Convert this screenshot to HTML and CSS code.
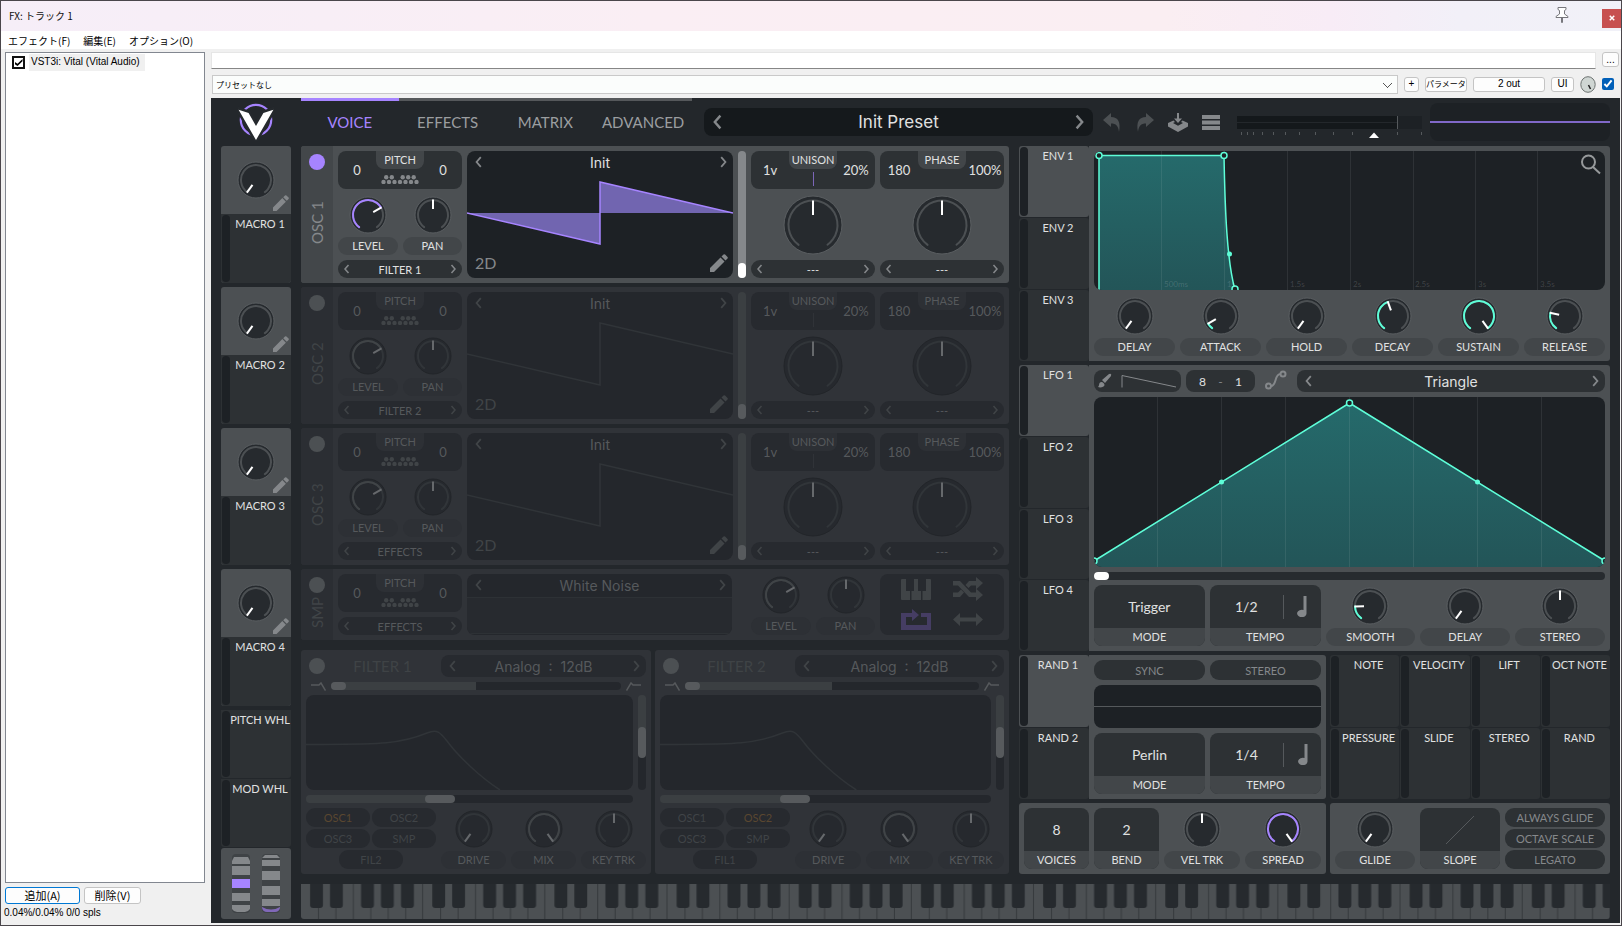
FILE: index.html
```html
<!DOCTYPE html>
<html lang="ja">
<head>
<meta charset="utf-8">
<title>FX: トラック 1</title>
<link rel="stylesheet" href="styles.css">
</head>
<body>
<svg class="defs" aria-hidden="true">
  <defs>
    <linearGradient id="teal" x1="0" y1="0" x2="0" y2="1"><stop offset="0" stop-color="#256a6b"/><stop offset="1" stop-color="#235558"/></linearGradient>
    <pattern id="octave" width="700" height="35" patternUnits="userSpaceOnUse">
      <rect width="700" height="35" fill="#4c5053"/>
      <path d="M97 0h6v35h-6zM197 0h6v35h-6zM297 0h6v35h-6zM397 0h6v35h-6zM497 0h6v35h-6zM597 0h6v35h-6zM694 0h6v35h-6z" fill="#363a3d"/>
      <g fill="#262a2e"><rect x="52" y="-6" width="74" height="30" rx="17" ry="3"/><rect x="166" y="-6" width="74" height="30" rx="17" ry="3"/><rect x="344" y="-6" width="74" height="30" rx="17" ry="3"/><rect x="458" y="-6" width="74" height="30" rx="17" ry="3"/><rect x="573" y="-6" width="74" height="30" rx="17" ry="3"/></g>
    </pattern>
  </defs>
  <symbol id="knob" viewBox="-19 -19 38 38">
    <circle r="18" class="k-face"/>
    <circle r="15" class="k-arc k-track" pathLength="360"/>
    <circle r="15" class="k-arc k-value" pathLength="360"/>
    <path d="M0-15.500V-6" class="k-hand"/>
  </symbol>
  <symbol id="knob-big" viewBox="-30 -30 60 60">
    <circle r="29" class="k-face"/>
    <circle r="24.500" class="k-arc k-track" pathLength="360"/>
    <path d="M0-24.500V-10" class="k-hand"/>
  </symbol>
  <symbol id="prev" viewBox="0 0 10 10"><path d="M6.500 1 3 5l3.500 4" class="line"/></symbol>
  <symbol id="next" viewBox="0 0 10 10"><path d="M3.500 1 7 5 3.500 9" class="line"/></symbol>
  <symbol id="pencil" viewBox="0 0 18 18"><path d="M0 18v-4L10.500 3.500l4 4L4 18zM11.500 2.500 13.500.5q.8-.7 1.600 0l2.400 2.400q.7.800 0 1.600l-2 2z"/></symbol>
  <symbol id="dots" viewBox="0 0 38 9"><g><circle cx="2.500" cy="7" r="2.200"/><circle cx="8" cy="7" r="2.200"/><circle cx="13.500" cy="7" r="2.200"/><circle cx="19" cy="7" r="2.200"/><circle cx="24.500" cy="7" r="2.200"/><circle cx="30" cy="7" r="2.200"/><circle cx="35.500" cy="7" r="2.200"/><circle cx="5.200" cy="2.300" r="2.200"/><circle cx="10.800" cy="2.300" r="2.200"/><circle cx="21.700" cy="2.300" r="2.200"/><circle cx="27.200" cy="2.300" r="2.200"/><circle cx="32.700" cy="2.300" r="2.200"/></g></symbol>
  <symbol id="note" viewBox="0 0 10 21"><path d="M6.500 0H9.500V17.300A4.700 3.700 0 1 1 6.500 14z"/></symbol>
  <symbol id="lowpass" viewBox="0 0 15 9"><path d="M0 3H8L10 1 14.500 8.500" class="line"/></symbol>
  <symbol id="highpass" viewBox="0 0 15 9"><path d="M15 3H7L5 1 .5 8.500" class="line"/></symbol>
</svg>

<header class="titlebar">
  <h1>FX: トラック 1</h1>
  <button class="pin" aria-label="Pin"><svg width="14" height="16" viewBox="0 0 14 16"><path d="M3 .5H11V2.500L9.500 3.500V7L13 9.500V10.500H1V9.500L4.500 7V3.500L3 2.500zM6.500 10.500h1V15.500h-1z" fill="#fff" stroke="#77777c"/></svg></button>
  <button class="close" aria-label="Close"><svg width="6" height="6" viewBox="0 0 8 8"><path d="M1 1 7 7M7 1 1 7" stroke="#fff" stroke-width="2"/></svg></button>
</header>
<nav class="menu"><button>エフェクト(F)</button><button>編集(E)</button><button>オプション(O)</button></nav>

<div class="client">
  <aside class="chain">
    <ul class="fx-list"><li><label><input type="checkbox" checked><span>VST3i: Vital (Vital Audio)</span></label></li></ul>
    <div class="chain-buttons"><button class="win-btn primary">追加(A)</button><button class="win-btn">削除(V)</button></div>
    <p class="cpu">0.04%/0.04% 0/0 spls</p>
  </aside>

  <main class="host">
    <div class="host-row"><input class="comment" type="text" aria-label="Comment"><button class="win-btn more">...</button></div>
    <div class="host-row second">
      <select class="preset-select" aria-label="Preset"><option>プリセットなし</option></select>
      <button class="win-btn plus">+</button>
      <button class="win-btn param">パラメータ</button>
      <button class="win-btn out">2 out</button>
      <button class="win-btn ui">UI</button>
      <svg class="wet" viewBox="0 0 16 17"><ellipse cx="8" cy="8.500" rx="7.200" ry="7.800" fill="#cfd6d3" stroke="#6d7371"/><path d="M8.500 9 10.500 13" stroke="#222" stroke-width="1.500"/></svg>
      <input class="bypass" type="checkbox" checked aria-label="Enable">
    </div>

    <section class="vital">
      <header class="v-head">
        <svg class="logo" viewBox="0 0 36 38"><circle cx="18" cy="17" r="15.200" fill="none" stroke="#a684ff" stroke-width="2.200"/><path d="M.6 6.700 10.600 10 18 23 25.400 10 35.400 6.700 18 37z" fill="#fff" stroke="#25292d" stroke-width="5" paint-order="stroke"/></svg>
        <nav class="tabs"><button class="tab active">VOICE</button><button class="tab">EFFECTS</button><button class="tab">MATRIX</button><button class="tab">ADVANCED</button></nav>
        <div class="preset"><button aria-label="Previous preset"><svg><use href="#prev"/></svg></button><span>Init Preset</span><button aria-label="Next preset"><svg><use href="#next"/></svg></button></div>
        <div class="tools">
          <button class="dimmed" aria-label="Undo"><svg width="18" height="19" viewBox="0 0 18 19"><path d="M0 7 8 0V4C15 4 18 9 16 19 15.500 13 13 10.500 8 10.500V14z"/></svg></button>
          <button class="dimmed" aria-label="Redo"><svg width="18" height="19" viewBox="0 0 18 19"><path d="M18 7 10 0V4C3 4 0 9 2 19 2.500 13 5 10.500 10 10.500V14z"/></svg></button>
          <button aria-label="Save"><svg width="20" height="19" viewBox="0 0 20 19"><path d="M9 0h2v5.500h3L10 10 6 5.500h3zM0 10 5.500 7.500 7 9 5 10l5 2.700L15 10l-2-1 1.500-1.500L20 10v3.500L10 19 0 13.500z"/></svg></button>
          <button aria-label="Menu"><svg width="18" height="15" viewBox="0 0 18 15"><path d="M0 0h18v4H0zM0 5.500h18v4H0zM0 11h18v4H0z"/></svg></button>
        </div>
        <svg class="meter" viewBox="0 0 185 24" preserveAspectRatio="none"><path d="M0 0H185V6H0zM0 7H185V13H0z" fill="#14181b"/><path d="M161 0h24v13h-24z" fill="#1d2125"/><path d="M160 0h1v13h-1z" fill="#55595c"/><path d="M4.500 16v3M10.500 16v3M16.500 16v3M25.500 16v3M36.500 16v3M48.500 16v3M62.500 16v3M78.500 16v3M96.500 16v3M115.500 16v3M160.500 16v3M184.500 16v3" stroke="#55595c"/><path d="M137 16.500 142 22H132z" fill="#fff"/></svg>
        <div class="scope"></div>
      </header>

      <div class="v-body">
        <div class="sources">
          <section class="macro"><label class="dial" style="--v:0"><svg class="knob"><use href="#knob"/></svg><input type="range" value="0" aria-label="Macro 1"></label><svg class="edit"><use href="#pencil"/></svg><div class="mod"><span>MACRO 1</span></div></section>
          <section class="macro"><label class="dial" style="--v:0"><svg class="knob"><use href="#knob"/></svg><input type="range" value="0" aria-label="Macro 2"></label><svg class="edit"><use href="#pencil"/></svg><div class="mod"><span>MACRO 2</span></div></section>
          <section class="macro"><label class="dial" style="--v:0"><svg class="knob"><use href="#knob"/></svg><input type="range" value="0" aria-label="Macro 3"></label><svg class="edit"><use href="#pencil"/></svg><div class="mod"><span>MACRO 3</span></div></section>
          <section class="macro"><label class="dial" style="--v:0"><svg class="knob"><use href="#knob"/></svg><input type="range" value="0" aria-label="Macro 4"></label><svg class="edit"><use href="#pencil"/></svg><div class="mod"><span>MACRO 4</span></div></section>
          <div class="wheel-mods"><div class="mod"><span>PITCH WHL</span></div><div class="mod"><span>MOD WHL</span></div>
          <div class="wheels">
            <svg viewBox="0 0 18 59"><rect width="18" height="59" rx="4" fill="#3f4346"/><path d="M2 3h14l2 4H0zM0 12h18v9H0zM0 39h18v8H0zM0 51h18v4q-2 3-5 3H5q-3 0-5-3z" fill="#85888b"/><path d="M0 7h18v3H0z" fill="#85888b"/><path d="M0 25h18v9H0z" fill="#a684ff"/></svg>
            <svg viewBox="0 0 18 59"><rect width="18" height="59" rx="4" fill="#3f4346"/><path d="M3 1h12l3 3H0zM0 6h18v6H0zM0 17h18v9H0zM0 32h18v9H0zM0 45h18v7H0z" fill="#85888b"/><path d="M0 53q9 5 18 0v1q-1 4-5 4H5q-4 0-5-4z" fill="#8068b8"/></svg>
          </div></div>
        </div>

        <div class="voice">
          <section class="osc">
            <div class="strip"><button class="power" aria-label="OSC 1 on"></button><h2>OSC 1</h2></div>
            <div class="osc-col">
              <div class="duo"><span>0</span><b>PITCH</b><span>0</span><svg class="dots"><use href="#dots"/></svg></div>
              <div class="dials"><label class="dial" style="--v:.71"><svg class="knob"><use href="#knob"/></svg><input type="range" value="71"><span>LEVEL</span></label><label class="dial bipolar" style="--v:.5"><svg class="knob"><use href="#knob"/></svg><input type="range"><span>PAN</span></label></div>
              <div class="picker"><button aria-label="Previous"><svg><use href="#prev"/></svg></button><span>FILTER 1</span><button aria-label="Next"><svg><use href="#next"/></svg></button></div>
            </div>
            <div class="wave"><div class="picker name"><button aria-label="Previous"><svg><use href="#prev"/></svg></button><span>Init</span><button aria-label="Next"><svg><use href="#next"/></svg></button></div><svg class="saw" viewBox="0 0 266 64" preserveAspectRatio="none"><path d="M0 32H133V63zM133 32V1L266 32z" class="saw-fill"/><path d="M0 32 133 63V1L266 32" class="saw-line"/></svg><div class="wave-foot"><button>2D</button><button aria-label="Edit"><svg><use href="#pencil"/></svg></button></div></div>
            <input class="v-slider" type="range" value="0" aria-label="Frame">
            <div class="osc-col">
              <div class="duo"><span>1v</span><b>UNISON</b><span>20%</span><i class="voice-mark"></i></div>
              <label class="dial big bipolar" style="--v:.5"><svg class="knob"><use href="#knob-big"/></svg><input type="range" aria-label="Spectral morph"></label>
              <div class="picker"><button aria-label="Previous"><svg><use href="#prev"/></svg></button><span>---</span><button aria-label="Next"><svg><use href="#next"/></svg></button></div>
            </div>
            <div class="osc-col">
              <div class="duo"><span>180</span><b>PHASE</b><span>100%</span></div>
              <label class="dial big bipolar" style="--v:.5"><svg class="knob"><use href="#knob-big"/></svg><input type="range" aria-label="Distortion"></label>
              <div class="picker"><button aria-label="Previous"><svg><use href="#prev"/></svg></button><span>---</span><button aria-label="Next"><svg><use href="#next"/></svg></button></div>
            </div>
          </section>

          <section class="osc off">
            <div class="strip"><button class="power" aria-label="OSC 2 on"></button><h2>OSC 2</h2></div>
            <div class="osc-col">
              <div class="duo"><span>0</span><b>PITCH</b><span>0</span><svg class="dots"><use href="#dots"/></svg></div>
              <div class="dials"><label class="dial" style="--v:.71"><svg class="knob"><use href="#knob"/></svg><input type="range" value="71"><span>LEVEL</span></label><label class="dial bipolar" style="--v:.5"><svg class="knob"><use href="#knob"/></svg><input type="range"><span>PAN</span></label></div>
              <div class="picker"><button aria-label="Previous"><svg><use href="#prev"/></svg></button><span>FILTER 2</span><button aria-label="Next"><svg><use href="#next"/></svg></button></div>
            </div>
            <div class="wave"><div class="picker name"><button aria-label="Previous"><svg><use href="#prev"/></svg></button><span>Init</span><button aria-label="Next"><svg><use href="#next"/></svg></button></div><svg class="saw" viewBox="0 0 266 64" preserveAspectRatio="none"><path d="M0 32 133 63V1L266 32" class="saw-line"/></svg><div class="wave-foot"><button>2D</button><button aria-label="Edit"><svg><use href="#pencil"/></svg></button></div></div>
            <input class="v-slider" type="range" value="0" aria-label="Frame">
            <div class="osc-col">
              <div class="duo"><span>1v</span><b>UNISON</b><span>20%</span><i class="voice-mark"></i></div>
              <label class="dial big bipolar" style="--v:.5"><svg class="knob"><use href="#knob-big"/></svg><input type="range" aria-label="Spectral morph"></label>
              <div class="picker"><button aria-label="Previous"><svg><use href="#prev"/></svg></button><span>---</span><button aria-label="Next"><svg><use href="#next"/></svg></button></div>
            </div>
            <div class="osc-col">
              <div class="duo"><span>180</span><b>PHASE</b><span>100%</span></div>
              <label class="dial big bipolar" style="--v:.5"><svg class="knob"><use href="#knob-big"/></svg><input type="range" aria-label="Distortion"></label>
              <div class="picker"><button aria-label="Previous"><svg><use href="#prev"/></svg></button><span>---</span><button aria-label="Next"><svg><use href="#next"/></svg></button></div>
            </div>
          </section>

          <section class="osc off">
            <div class="strip"><button class="power" aria-label="OSC 3 on"></button><h2>OSC 3</h2></div>
            <div class="osc-col">
              <div class="duo"><span>0</span><b>PITCH</b><span>0</span><svg class="dots"><use href="#dots"/></svg></div>
              <div class="dials"><label class="dial" style="--v:.71"><svg class="knob"><use href="#knob"/></svg><input type="range" value="71"><span>LEVEL</span></label><label class="dial bipolar" style="--v:.5"><svg class="knob"><use href="#knob"/></svg><input type="range"><span>PAN</span></label></div>
              <div class="picker"><button aria-label="Previous"><svg><use href="#prev"/></svg></button><span>EFFECTS</span><button aria-label="Next"><svg><use href="#next"/></svg></button></div>
            </div>
            <div class="wave"><div class="picker name"><button aria-label="Previous"><svg><use href="#prev"/></svg></button><span>Init</span><button aria-label="Next"><svg><use href="#next"/></svg></button></div><svg class="saw" viewBox="0 0 266 64" preserveAspectRatio="none"><path d="M0 32 133 63V1L266 32" class="saw-line"/></svg><div class="wave-foot"><button>2D</button><button aria-label="Edit"><svg><use href="#pencil"/></svg></button></div></div>
            <input class="v-slider" type="range" value="0" aria-label="Frame">
            <div class="osc-col">
              <div class="duo"><span>1v</span><b>UNISON</b><span>20%</span><i class="voice-mark"></i></div>
              <label class="dial big bipolar" style="--v:.5"><svg class="knob"><use href="#knob-big"/></svg><input type="range" aria-label="Spectral morph"></label>
              <div class="picker"><button aria-label="Previous"><svg><use href="#prev"/></svg></button><span>---</span><button aria-label="Next"><svg><use href="#next"/></svg></button></div>
            </div>
            <div class="osc-col">
              <div class="duo"><span>180</span><b>PHASE</b><span>100%</span></div>
              <label class="dial big bipolar" style="--v:.5"><svg class="knob"><use href="#knob-big"/></svg><input type="range" aria-label="Distortion"></label>
              <div class="picker"><button aria-label="Previous"><svg><use href="#prev"/></svg></button><span>---</span><button aria-label="Next"><svg><use href="#next"/></svg></button></div>
            </div>
          </section>

          <section class="smp off">
            <div class="strip"><button class="power" aria-label="SMP on"></button><h2>SMP</h2></div>
            <div class="osc-col">
              <div class="duo"><span>0</span><b>PITCH</b><span>0</span><svg class="dots"><use href="#dots"/></svg></div>
              <div class="picker"><button aria-label="Previous"><svg><use href="#prev"/></svg></button><span>EFFECTS</span><button aria-label="Next"><svg><use href="#next"/></svg></button></div>
            </div>
            <div class="wave"><div class="picker name"><button aria-label="Previous"><svg><use href="#prev"/></svg></button><span>White Noise</span><button aria-label="Next"><svg><use href="#next"/></svg></button></div><div class="noise"></div></div>
            <div class="dials"><label class="dial" style="--v:.71"><svg class="knob"><use href="#knob"/></svg><input type="range" value="71"><span>LEVEL</span></label><label class="dial bipolar" style="--v:.5"><svg class="knob"><use href="#knob"/></svg><input type="range"><span>PAN</span></label></div>
            <div class="modes">
              <button aria-label="Keytrack"><svg width="30" height="21" viewBox="0 0 30 21"><path d="M0 1q0-1 1-1H5V12H9V21H1q-1 0-1-1zM13 0h4V12h3V21H10.500V12H13zM25 0h4q1 0 1 1V20q0 1-1 1H21.500V12H25z"/></svg></button>
              <button aria-label="Random phase"><svg width="30" height="24" viewBox="0 0 30 24"><path d="M0 4H7L18 15.500H23V11.500L30 18 23 24V20H16L5 8.500H0zM0 15.500H5L8 12.500 11 15.500 7 20H0zM16 4H23V0L30 6 23 12.500V8.500H18L15.500 11 12.500 8z"/></svg></button>
              <button class="on" aria-label="Loop"><svg width="30" height="21" viewBox="0 0 30 21"><path d="M0 4H11V0L18 6 11 12V8H5V16H26V8H20V4H30V21H0z"/></svg></button>
              <button aria-label="Bounce"><svg width="30" height="13" viewBox="0 0 30 13"><path d="M0 6.500 7 0V4.500H23V0L30 6.500 23 13V8.500H7V13z"/></svg></button>
            </div>
          </section>

          <div class="filters off">
            <section class="filter">
              <div class="f-head"><div class="f-title"><button class="power" aria-label="Filter 1 on"></button><h2>FILTER 1</h2></div><div class="picker name boxed"><button aria-label="Previous"><svg><use href="#prev"/></svg></button><span>Analog&nbsp; :&nbsp; 12dB</span><button aria-label="Next"><svg><use href="#next"/></svg></button></div></div>
              <div class="f-blend"><svg><use href="#lowpass"/></svg><input class="h-slider half" type="range" value="0" aria-label="Blend"><svg><use href="#highpass"/></svg></div>
              <div class="f-view"><svg class="graph" viewBox="0 0 327 95" preserveAspectRatio="none"><path d="M0 49.500C70 49 92 50 121 38C131 34 134 37 141 46C152 61 174 82 194 95" class="resp"/></svg><input class="v-slider wide" type="range" value="50" aria-label="Resonance"></div>
              <input class="h-slider cutoff" type="range" value="40" aria-label="Cutoff">
              <div class="f-foot">
                <div class="routes"><button class="on">OSC1</button><button>OSC2</button><button>OSC3</button><button>SMP</button><button class="last">FIL2</button></div>
                <label class="dial" style="--v:0"><svg class="knob"><use href="#knob"/></svg><input type="range"><span>DRIVE</span></label>
                <label class="dial" style="--v:1"><svg class="knob"><use href="#knob"/></svg><input type="range"><span>MIX</span></label>
                <label class="dial bipolar" style="--v:.5"><svg class="knob"><use href="#knob"/></svg><input type="range"><span>KEY TRK</span></label>
              </div>
            </section>
            <section class="filter">
              <div class="f-head"><div class="f-title"><button class="power" aria-label="Filter 2 on"></button><h2>FILTER 2</h2></div><div class="picker name boxed"><button aria-label="Previous"><svg><use href="#prev"/></svg></button><span>Analog&nbsp; :&nbsp; 12dB</span><button aria-label="Next"><svg><use href="#next"/></svg></button></div></div>
              <div class="f-blend"><svg><use href="#lowpass"/></svg><input class="h-slider half" type="range" value="0" aria-label="Blend"><svg><use href="#highpass"/></svg></div>
              <div class="f-view"><svg class="graph" viewBox="0 0 327 95" preserveAspectRatio="none"><path d="M0 49.500C70 49 92 50 121 38C131 34 134 37 141 46C152 61 174 82 194 95" class="resp"/></svg><input class="v-slider wide" type="range" value="50" aria-label="Resonance"></div>
              <input class="h-slider cutoff" type="range" value="40" aria-label="Cutoff">
              <div class="f-foot">
                <div class="routes"><button>OSC1</button><button class="on">OSC2</button><button>OSC3</button><button>SMP</button><button class="last">FIL1</button></div>
                <label class="dial" style="--v:0"><svg class="knob"><use href="#knob"/></svg><input type="range"><span>DRIVE</span></label>
                <label class="dial" style="--v:1"><svg class="knob"><use href="#knob"/></svg><input type="range"><span>MIX</span></label>
                <label class="dial bipolar" style="--v:.5"><svg class="knob"><use href="#knob"/></svg><input type="range"><span>KEY TRK</span></label>
              </div>
            </section>
          </div>
        </div>

        <div class="modulators">
          <section class="modbox">
            <div class="mod-tabs"><button class="mod active"><span>ENV 1</span></button><button class="mod"><span>ENV 2</span></button><button class="mod"><span>ENV 3</span></button></div>
            <div class="mod-panel env">
              <div class="env-view">
                <svg viewBox="0 0 511 139" preserveAspectRatio="none">
                  <path d="M5 139V4.500H130C131 60 133 110 141 139z" fill="url(#teal)"/>
                  <path d="M67.500 0V139M130.500 0V139M193.500 0V139M256.500 0V139M319.500 0V139M381.500 0V139M443.500 0V139" stroke="#fff" stroke-opacity=".08"/>
                  <path d="M5 139V4.500H130C131 60 133 110 141 139" class="teal-line"/>
                  <g class="teal-dot"><circle cx="5" cy="4.500" r="3"/><circle cx="130" cy="4.500" r="3"/><circle cx="141" cy="138" r="3"/></g><circle cx="135.500" cy="103" r="2.500" fill="#5efed8"/>
                  <g class="time"><text x="70" y="136">500ms</text><text x="133" y="136">1s</text><text x="196" y="136">1.5s</text><text x="259" y="136">2s</text><text x="321" y="136">2.5s</text><text x="384" y="136">3s</text><text x="446" y="136">3.5s</text></g>
                  <g fill="none" stroke="#96999b" stroke-width="2"><circle cx="494.500" cy="11" r="6.500"/><path d="M499 16 506 22.500"/></g>
                </svg>
              </div>
              <div class="dial-row">
                <label class="dial" style="--v:0"><svg class="knob"><use href="#knob"/></svg><input type="range"><span>DELAY</span></label>
                <label class="dial" style="--v:.08"><svg class="knob"><use href="#knob"/></svg><input type="range"><span>ATTACK</span></label>
                <label class="dial" style="--v:0"><svg class="knob"><use href="#knob"/></svg><input type="range"><span>HOLD</span></label>
                <label class="dial" style="--v:.43"><svg class="knob"><use href="#knob"/></svg><input type="range"><span>DECAY</span></label>
                <label class="dial" style="--v:1"><svg class="knob"><use href="#knob"/></svg><input type="range"><span>SUSTAIN</span></label>
                <label class="dial" style="--v:.23"><svg class="knob"><use href="#knob"/></svg><input type="range"><span>RELEASE</span></label>
              </div>
            </div>
          </section>

          <section class="modbox">
            <div class="mod-tabs"><button class="mod active"><span>LFO 1</span></button><button class="mod"><span>LFO 2</span></button><button class="mod"><span>LFO 3</span></button><button class="mod"><span>LFO 4</span></button></div>
            <div class="mod-panel">
              <div class="lfo-head">
                <button class="paint" aria-label="Paint"><svg viewBox="0 0 87 22" preserveAspectRatio="none"><path d="M8 10 15 4q3-1 2 2L11 13zM4 17q1-1 1.500-4 2-2 4 0t0 3.500q-3 1.500-5.500.5z" fill="#85888b"/><path d="M28 17.500V5.500L82 17" fill="none" stroke="#85888b"/></svg></button>
                <div class="grid-size"><span>8</span><i>-</i><span>1</span></div>
                <button class="smooth" aria-label="Smooth"><svg width="22" height="20" viewBox="0 0 22 20"><circle cx="3.500" cy="16" r="2.500"/><circle cx="18" cy="4" r="2.500"/><path d="M6 16C12 16 9 4 15.500 4"/></svg></button>
                <div class="picker name boxed"><button aria-label="Previous"><svg><use href="#prev"/></svg></button><span>Triangle</span><button aria-label="Next"><svg><use href="#next"/></svg></button></div>
              </div>
              <div class="lfo-view">
                <svg viewBox="0 0 511 170" preserveAspectRatio="none">
                  <path d="M0 170V164L255.500 6 511 164V170z" fill="url(#teal)"/>
                  <path d="M63.500 0V170M127.500 0V170M191.500 0V170M255.500 0V170M319.500 0V170M383.500 0V170M447.500 0V170" stroke="#fff" stroke-opacity=".08"/>
                  <path d="M0 164 255.500 6 511 164" class="teal-line"/>
                  <g class="teal-dot"><circle cx="0" cy="164" r="3"/><circle cx="255.500" cy="6" r="3"/><circle cx="511" cy="164" r="3"/></g><circle cx="127.500" cy="85" r="2.500" fill="#5efed8"/><circle cx="383.500" cy="85" r="2.500" fill="#5efed8"/>
                </svg>
              </div>
              <input class="h-slider lfo-phase" type="range" value="0" aria-label="Phase">
              <div class="lfo-foot">
                <div class="cell"><b>Trigger</b><span>MODE</span></div>
                <div class="cell tempo"><b>1/2</b><i></i><svg><use href="#note"/></svg><span>TEMPO</span></div>
                <label class="dial" style="--v:.18"><svg class="knob"><use href="#knob"/></svg><input type="range"><span>SMOOTH</span></label>
                <label class="dial" style="--v:0"><svg class="knob"><use href="#knob"/></svg><input type="range"><span>DELAY</span></label>
                <label class="dial bipolar" style="--v:.5"><svg class="knob"><use href="#knob"/></svg><input type="range"><span>STEREO</span></label>
              </div>
            </div>
          </section>

          <div class="lower">
            <section class="modbox">
              <div class="mod-tabs"><button class="mod active"><span>RAND 1</span></button><button class="mod"><span>RAND 2</span></button></div>
              <div class="mod-panel rand">
                <button class="toggle">SYNC</button><button class="toggle">STEREO</button>
                <div class="rand-view"></div>
                <div class="cell"><b>Perlin</b><span>MODE</span></div>
                <div class="cell tempo"><b>1/4</b><i></i><svg><use href="#note"/></svg><span>TEMPO</span></div>
              </div>
            </section>
            <section class="key-mods">
              <div class="mod"><span>NOTE</span></div><div class="mod"><span>VELOCITY</span></div><div class="mod"><span>LIFT</span></div><div class="mod"><span>OCT NOTE</span></div>
              <div class="mod"><span>PRESSURE</span></div><div class="mod"><span>SLIDE</span></div><div class="mod"><span>STEREO</span></div><div class="mod"><span>RAND</span></div>
            </section>
            <section class="voicing">
              <div class="cell"><b>8</b><span>VOICES</span></div>
              <div class="cell"><b>2</b><span>BEND</span></div>
              <label class="dial bipolar" style="--v:.5"><svg class="knob"><use href="#knob"/></svg><input type="range"><span>VEL TRK</span></label>
              <label class="dial" style="--v:1"><svg class="knob"><use href="#knob"/></svg><input type="range"><span>SPREAD</span></label>
            </section>
            <section class="gliding">
              <label class="dial" style="--v:0"><svg class="knob"><use href="#knob"/></svg><input type="range"><span>GLIDE</span></label>
              <div class="cell"><svg class="slope" viewBox="0 0 30 30"><path d="M1 29 29 1" stroke="#55595c"/></svg><span>SLOPE</span></div>
              <div class="glide-opts"><button class="toggle">ALWAYS GLIDE</button><button class="toggle">OCTAVE SCALE</button><button class="toggle">LEGATO</button></div>
            </section>
          </div>
        </div>
        <svg class="keyboard" viewBox="0 0 7500 35" preserveAspectRatio="none"><rect width="7500" height="35" fill="url(#octave)"/></svg>
      </div>
    </section>
  </main>
</div>
</body>
</html>
```

FILE: styles.css
```css
* { box-sizing: border-box; }

:root {
  --panel: #4c5053;
  --strip: #43474a;
  --box: #2d3134;
  --tag: #424649;
  --well: #1d2125;
  --text: #e0e1e1;
  --faint: #85888b;
  --icon: #85888b;
  --face: #262a2e;
  --rim: #5a5e61;
  --track: #4c5053;
  --value: #a684ff;
  --hand: #ffffff;
  --thumb: #ffffff;
  --rail: #85888b;
  --curve: #a684ff;
}

.off {
  --panel: #303338;
  --strip: #2b2e33;
  --box: #272a2f;
  --tag: #2d3035;
  --well: #24272c;
  --text: #56595c;
  --faint: #404447;
  --icon: #404447;
  --face: #26292e;
  --rim: #222529;
  --track: #313539;
  --value: #404447;
  --hand: #66696c;
  --thumb: #575a5d;
  --rail: #3b3f42;
  --curve: #303438;
  color: var(--text);
}

body {
  margin: 0;
  min-height: 100vh;
  display: flex;
  flex-direction: column;
  background: #f0f0f0;
  border: 1px solid #4a464b;
  font-family: "Liberation Sans", "Noto Sans CJK JP", sans-serif;
  font-size: 10px;
  color: #000;
}

button, input, select { font: inherit; color: inherit; margin: 0; }
button { background: none; border: 0; padding: 0; }
h1, h2, p, ul { margin: 0; padding: 0; font-weight: 400; list-style: none; }
.defs { position: absolute; width: 0; height: 0; }

/* window frame */
.titlebar {
  display: flex;
  align-items: center;
  height: 30px;
  padding-left: 8px;
  background: linear-gradient(90deg, #f6eef8 0%, #faeef4 40%, #faeef2 72%, #f8ecf6 82%, #f2f0f8 90%, #f1f1f8 100%);
}
.titlebar h1 { flex: 1; font: 10px/28px "Noto Sans CJK JP", sans-serif; color: #111; }
.pin { margin-right: 33px; height: 18px; }
.close { display: grid; place-items: center; width: 19px; height: 19px; margin-top: 4px; background: #c75050; }
.menu { display: flex; gap: 13px; height: 18px; padding-left: 7px; background: #fff; font: 10px/19px "Noto Sans CJK JP", sans-serif; }

.client { flex: 1; display: grid; grid-template-columns: 200px minmax(0, 1fr); gap: 6px; padding: 3px 1px 2px 4px; }
.chain { display: flex; flex-direction: column; }
.fx-list { flex: 1; margin-bottom: 4px; padding: 1px 6px; background: #fff; border: 1px solid #828790; }
.fx-list label { display: flex; align-items: center; gap: 4px; }
.fx-list span { padding: 2px 5px 3px 2px; background: #f0f0f0; line-height: 12px; }
.fx-list input {
  display: grid;
  place-items: center;
  appearance: none;
  width: 13px;
  height: 13px;
  border: 2px solid #111;
  background: #fff;
}
.fx-list input:checked::before { content: ""; width: 8px; height: 7px; background: #000; clip-path: polygon(0 40%, 38% 68%, 100% 0, 100% 32%, 38% 100%, 0 72%); }
.win-btn { background: #fdfdfd; border: 1px solid #c4c4c4; border-radius: 3px; white-space: nowrap; overflow: hidden; }
.chain-buttons { display: flex; gap: 4px; }
.chain-buttons .win-btn { width: 57px; height: 17px; font: 11px/13px "Noto Sans CJK JP", sans-serif; }
.chain-buttons .primary { width: 75px; border-color: #0078d4; }
.cpu { height: 19px; line-height: 18px; margin-left: -1px; }

.host { display: flex; flex-direction: column; min-width: 0; }
.host-row { display: flex; gap: 6px; height: 17px; }
.comment { flex: 1; height: 17px; border: 1px solid #e6e6e6; border-bottom-color: #868686; background: #fff; }
.more { width: 17px; height: 15px; line-height: 10px; margin-right: 1px; }
.second { height: 18px; margin: 6px 6px 5px 1px; align-items: center; }
.preset-select {
  flex: 1;
  appearance: none;
  height: 19px;
  padding: 0 3px;
  border: 1px solid #c9c9c9;
  background: linear-gradient(45deg, transparent 45%, #555 45% 55%, transparent 55%) calc(100% - 9px) 7px / 5px 5px no-repeat, linear-gradient(-45deg, transparent 45%, #555 45% 55%, transparent 55%) calc(100% - 5px) 7px / 5px 5px no-repeat, #fbfdfc;
  font: 8px "Noto Sans CJK JP", sans-serif;
}
.second .win-btn { height: 15px; line-height: 12px; padding: 0; }
.plus { width: 15px; }
.param { width: 42px; font-family: "Noto Sans CJK JP", sans-serif; font-size: 8px; }
.out { width: 72px; }
.ui { width: 23px; }
.wet { width: 16px; height: 17px; }
.bypass { width: 12px; height: 12px; accent-color: #005fb8; }

/* synth */
.vital { flex: 1; display: flex; flex-direction: column; padding: 0 10px 4px; background: #23272b; color: var(--text); font-family: Lato, sans-serif; font-size: 11px; }
.vital svg { fill: var(--icon); }
.line { fill: none; stroke: var(--icon); stroke-width: 1.5; }
.v-head { display: flex; align-items: center; height: 48px; }
.logo { width: 36px; height: 38px; margin: 0 27px 0 17px; }
.tabs { flex: 1 1 391px; display: flex; align-self: stretch; }
.tab { flex: 1; padding-bottom: 4px; border-top: 3px solid #55585b; font-size: 15px; color: #9b9ea0; }
.tab.active { border-color: #a684ff; color: #a684ff; }
.preset { flex: 1 1 389px; display: flex; align-items: center; justify-content: space-between; height: 28px; margin-left: 12px; padding: 0 4px; border-radius: 8px; background: #15191c; font: 17px Inter, sans-serif; color: #e0e1e1; }
.preset button { width: 20px; height: 20px; display: grid; place-items: center; }
.preset button svg { width: 16px; height: 16px; }
.tools { display: flex; margin: 0 10px 0 2px; }
.tools button { width: 33px; height: 20px; display: grid; place-items: center; }
.tools .dimmed svg { fill: #4c5053; }
.meter { width: 185px; height: 24px; margin: 12px 8px 0 0; align-self: center; }
.scope { width: 180px; height: 38px; border-radius: 8px; background: linear-gradient(#8068c8, #8068c8) 0 50% / 100% 2px no-repeat, #1d2125; }

.v-body { display: grid; grid-template-columns: 70px minmax(0, 708fr) minmax(0, 591fr); grid-template-rows: auto 35px; gap: 10px; flex: 1; }
.sources { grid-row: 1 / 3; display: flex; flex-direction: column; gap: 4px; }
.voice, .modulators { display: flex; flex-direction: column; gap: 4px; }
.keyboard { grid-column: 2 / 4; width: 100%; height: 35px; border-radius: 0 0 3px 3px; }

/* modulation source cells */
.mod { position: relative; display: flex; justify-content: center; align-items: flex-start; padding: 2px 0 0 8px; border-radius: 3px; background: var(--box); }
.mod::before { content: ""; position: absolute; left: 1px; top: 1px; bottom: 1px; width: 8px; border-radius: 4px; background: #1d2125; }
.mod span { line-height: 16px; white-space: nowrap; }
.mod.active { background: var(--panel); }
.macro { position: relative; display: grid; grid-template-rows: 68px 69px; border-radius: 3px; background: var(--panel); }
.macro .dial { align-self: center; }
.macro .mod, .wheel-mods .mod { border-radius: 0 0 3px 3px; }
.edit { position: absolute; right: 2px; top: 49px; width: 16px; height: 16px; }
.wheel-mods { flex: 1; display: grid; grid-template-columns: minmax(0, 1fr); grid-template-rows: 68px 68px 1fr; gap: 1px; }
.wheels { display: flex; justify-content: center; align-items: center; gap: 12px; border-radius: 3px; background: var(--panel); }
.wheels svg { width: 18px; height: 59px; }

/* dials */
.dial { position: relative; display: flex; flex-direction: column; justify-content: flex-end; align-items: center; gap: 3px; min-width: 0; }
.dial input { position: absolute; inset: 0; width: 100%; height: 100%; opacity: 0; }
.dial > span { align-self: stretch; border-radius: 9px; background: var(--tag); line-height: 18px; text-align: center; }
.knob { width: 38px; height: 38px; }
.big .knob { width: 60px; height: 60px; }
.k-face { fill: var(--face); stroke: var(--rim); }
.k-arc { fill: none; stroke-width: 2; stroke-linecap: round; transform: rotate(126deg); }
.k-track { stroke: var(--track); stroke-dasharray: 288px 72px; }
.k-value { stroke: var(--value); stroke-dasharray: calc(var(--v) * 288px) 360px; stroke-opacity: calc(var(--v) * 1000); }
.bipolar { --value: transparent; }
.k-hand { stroke: var(--hand); stroke-width: 2; transform: rotate(calc(var(--v) * 288deg - 144deg)); }
.dials { display: grid; grid-template-columns: 60fr 59fr; gap: 5px; }
.dial-row { display: grid; grid-template-columns: repeat(6, 1fr); gap: 5px; }

/* oscillators */
.osc, .smp { display: grid; grid-template-columns: 32px 124px minmax(0, 1fr) 8px 124px 124px; gap: 5px; padding-right: 5px; border-radius: 3px; background: var(--panel); }
.osc { height: 137px; }
.smp { grid-template-columns: 32px 124px minmax(0, 1fr) 124px 124px; height: 71px; }
.smp .wave { margin-right: 14px; }
.osc > *, .smp > * { margin-top: 5px; margin-bottom: 5px; }
.osc > .strip, .smp > .strip { margin: 0; }
.strip { display: flex; flex-direction: column; align-items: center; padding: 8px 0; border-radius: 3px 0 0 3px; background: var(--strip); }
.strip h2 { flex: 1; display: flex; align-items: center; justify-content: center; writing-mode: vertical-rl; transform: rotate(180deg); font-size: 15px; color: var(--faint); white-space: nowrap; }
.power { width: 16px; height: 16px; flex: none; border-radius: 50%; background: #a684ff; }
.off .power { background: #4c5053; }
.osc-col { display: grid; grid-template-rows: 38px 1fr 18px; gap: 5px; }
.smp .osc-col { grid-template-rows: 38px 18px; }
.duo { position: relative; display: grid; grid-template-columns: 38px 48px 38px; grid-template-rows: 18px 20px; justify-items: center; border-radius: 8px; background: var(--box); }
.duo > span { grid-row: 1 / 3; align-self: center; font-size: 13px; }
.duo b { grid-column: 2; grid-row: 1; justify-self: stretch; border-radius: 0 0 8px 8px; background: var(--tag); font-weight: 400; line-height: 18px; text-align: center; }
.duo > span:nth-of-type(2) { grid-column: 3; }
.dots, .voice-mark { grid-column: 2; grid-row: 2; }
.dots { width: 38px; height: 9px; margin-top: 6px; }
.voice-mark { width: 1px; height: 14px; margin-top: 3px; background: #7c66b8; }
.off .voice-mark { background: #303338; }
.picker { display: flex; align-items: center; justify-content: space-between; padding: 0 4px; border-radius: 9px; background: var(--box); height: 18px; }
.picker button { width: 10px; height: 18px; display: grid; place-items: center; }
.picker svg { width: 10px; height: 10px; }
.picker.name { height: 22px; background: none; padding: 0 6px; font: 14px Inter, sans-serif; }
.picker.boxed { background: var(--box); border-radius: 8px; }
.picker.name svg { width: 12px; height: 12px; }
.wave { display: flex; flex-direction: column; border-radius: 8px; background: var(--well); overflow: hidden; }
.saw { width: 100%; height: 64px; margin-top: 8px; }
.saw-fill { fill: #7165b0; }
.saw-line, .resp { fill: none; stroke: var(--curve); stroke-width: 1.5; }
.wave-foot { display: flex; justify-content: space-between; align-items: center; padding: 0 5px 5px 8px; margin-top: auto; }
.wave-foot button { font-size: 16px; line-height: 20px; color: var(--faint); }
.wave-foot svg { display: block; width: 18px; height: 18px; }
.noise { flex: 1; margin: 1px 0; border: 1px solid #2d3135; border-width: 1px 0; background: #272a2f; }
.modes { display: grid; grid-template-columns: 1fr 1fr; grid-template-rows: 1fr 1fr; place-items: center; padding: 0 10px; border-radius: 8px; background: var(--box); }
.modes button { display: grid; }
.modes .on svg { fill: #453d63; }

/* sliders */
.v-slider { appearance: none; width: 8px; height: auto; min-height: 0; writing-mode: vertical-lr; direction: rtl; border-radius: 4px; background: var(--rail); }
.v-slider::-webkit-slider-thumb { appearance: none; width: 8px; height: 15px; border-radius: 4px; background: var(--thumb); }
.v-slider.wide { background: linear-gradient(var(--rail) 50%, #24272c 50%); }
.v-slider.wide::-webkit-slider-thumb { height: 31px; }
.h-slider { appearance: none; width: 100%; min-width: 0; height: 8px; border-radius: 4px; background: #272b2f; }
.h-slider::-webkit-slider-thumb { appearance: none; width: 15px; height: 8px; border-radius: 4px; background: var(--thumb); }
.h-slider.half { background: linear-gradient(90deg, var(--rail) 50%, #24272c 50%); }
.h-slider.cutoff { width: calc(100% - 13px); background: linear-gradient(90deg, var(--rail) 40%, #24272c 40%); }
.h-slider.cutoff::-webkit-slider-thumb { width: 30px; }

/* filters */
.filters { display: grid; grid-template-columns: 350fr 354fr; gap: 4px; margin-top: 6px; }
.filter { display: flex; flex-direction: column; gap: 5px; padding: 5px; border-radius: 3px; background: var(--panel); }
.f-head, .f-foot { display: grid; grid-template-columns: 130px minmax(0, 1fr); gap: 5px; }
.f-title { display: flex; align-items: center; padding-left: 3px; }
.f-title h2 { flex: 1; text-align: center; padding-left: 4px; font-size: 15px; line-height: 22px; color: #3f4346; }
.f-blend { display: flex; align-items: center; gap: 5px; height: 8px; padding: 0 5px; }
.f-blend svg { flex: none; width: 15px; height: 9px; --icon: #56595c; }
.f-view { display: grid; grid-template-columns: minmax(0, 1fr) 8px; gap: 5px; height: 95px; }
.graph { width: 100%; height: 95px; border-radius: 8px; background: var(--well); }
.f-foot { grid-template-columns: 130px repeat(3, minmax(0, 1fr)); }
.routes { display: grid; grid-template-columns: 64px 64px; grid-template-rows: repeat(3, 19px); gap: 2px; }
.routes button { border-radius: 9px; background: var(--box); color: #404447; }
.routes .on { color: #5a4730; }
.routes .last { grid-column: 1 / 3; justify-self: center; width: 64px; }

/* envelopes, LFOs, random */
.modbox { display: grid; grid-template-columns: 70px minmax(0, 1fr); }
.mod-tabs { display: grid; grid-auto-rows: 1fr; gap: 1px; }
.mod-panel { display: flex; flex-direction: column; gap: 5px; padding: 5px; border-radius: 0 3px 3px 0; background: var(--panel); --value: #5efed8; }
.mod-panel .bipolar { --value: transparent; }
.env-view, .lfo-view { height: 139px; border-radius: 8px; background: var(--well); overflow: hidden; }
.lfo-view { height: 170px; }
.env-view svg, .lfo-view svg { display: block; width: 100%; height: 100%; }
.env { gap: 7px; }
.teal-line { fill: none; stroke: #5efed8; stroke-width: 1.5; }
.teal-dot { fill: #1d2125; stroke: #5efed8; stroke-width: 1.5; }
.time { fill: #fff; fill-opacity: .16; font-size: 8px; }
.lfo-head { display: grid; grid-template-columns: 87px 69px 32px minmax(0, 1fr); gap: 5px; height: 22px; }
.paint, .grid-size { border-radius: 8px; background: var(--box); }
.paint svg { display: block; width: 87px; height: 22px; }
.grid-size { display: flex; align-items: center; justify-content: space-between; padding: 0 13px; font-size: 12px; }
.grid-size i { font-style: normal; color: var(--faint); }
.smooth svg { fill: none; stroke: var(--icon); stroke-width: 2; }
.lfo-foot { display: grid; grid-template-columns: 111fr 111fr 90fr 90fr 90fr; gap: 5px; height: 61px; }
.cell { display: grid; grid-template-rows: 1fr 18px; border-radius: 8px; background: var(--box); overflow: hidden; }
.cell b { place-self: center; font-weight: 400; font-size: 14px; }
.cell > span { grid-column: 1 / -1; background: var(--tag); line-height: 18px; text-align: center; }
.tempo { grid-template-columns: 73px 1px 1fr; align-items: center; }
.tempo i { height: 24px; background: #55595c; }
.tempo svg { justify-self: center; width: 10px; height: 21px; }
.lower { display: grid; grid-template-columns: 307fr 280fr; gap: 4px; }
.rand { display: grid; grid-template-columns: 1fr 1fr; grid-template-rows: 20px 43px 61px; }
.toggle { border-radius: 9px; background: var(--box); color: var(--faint); }
.rand-view { grid-column: 1 / 3; border-radius: 8px; background: linear-gradient(#55595c, #55595c) 0 50% / 100% 1px no-repeat, var(--well); }
.key-mods { display: grid; grid-template-columns: repeat(4, minmax(0, 1fr)); grid-auto-rows: 1fr; gap: 1px; }
.voicing, .gliding { display: grid; gap: 5px; height: 71px; padding: 5px; border-radius: 3px; background: var(--panel); }
.voicing { grid-template-columns: 65fr 65fr 76fr 76fr; }
.gliding { grid-template-columns: 80fr 80fr 100fr; }
.slope { place-self: center; width: 30px; height: 30px; }
.glide-opts { display: grid; grid-template-rows: repeat(3, 1fr); gap: 2px; }
```
